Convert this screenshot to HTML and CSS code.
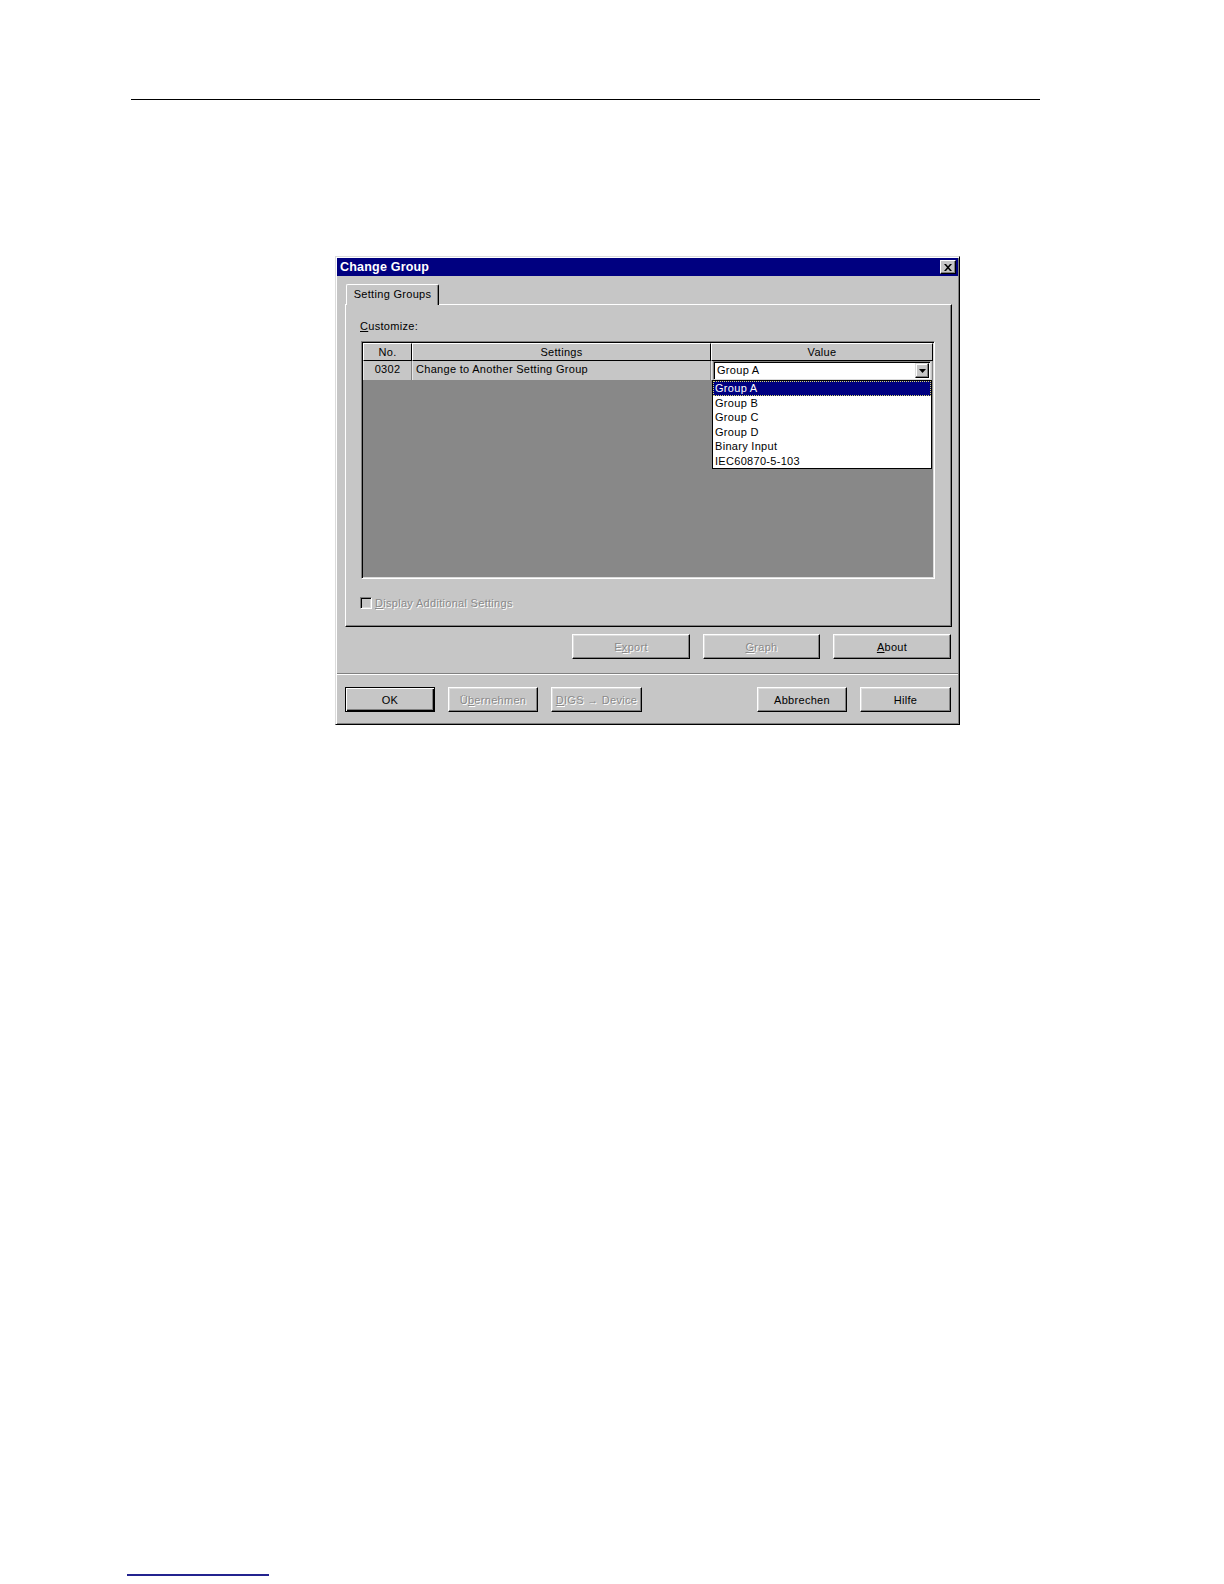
FILE: index.html
```html
<!DOCTYPE html>
<html>
<head>
<meta charset="utf-8">
<title>Change Group</title>
<link rel="stylesheet" href="styles.css">
</head>
<body>
<div class="page">
  <div class="rule"></div>

  <div class="dialog">
    <div class="titlebar">
      <span class="title">Change Group</span>
      <span class="close-btn">
        <svg width="8" height="7" viewBox="0 0 8 7"><path d="M0 0h2l2 2.3 2-2.3h2L5 3.5 8 7H6L4 4.7 2 7H0l3-3.5z" fill="#000"/></svg>
      </span>
    </div>

    <div class="dlg-body">
      <div class="tabs"><div class="tab">Setting Groups</div></div>
      <div class="panel">
        <div class="label"><u>C</u>ustomize:</div>
        <div class="grid">
          <div class="grid-inner">
            <div class="row head">
              <div class="hc">No.</div>
              <div class="hc">Settings</div>
              <div class="hc">Value</div>
            </div>
            <div class="row data">
              <div class="dc center">0302</div>
              <div class="dc">Change to Another Setting Group</div>
              <div class="dc val">
                <div class="combo">
                  <span class="combo-text">Group A</span>
                  <span class="dd-btn"><svg width="7" height="4" viewBox="0 0 7 4"><path d="M0 0h7L3.5 4z" fill="#000"/></svg></span>
                </div>
              </div>
            </div>
            <ul class="droplist">
              <li class="sel">Group A</li>
              <li>Group B</li>
              <li>Group C</li>
              <li>Group D</li>
              <li>Binary Input</li>
              <li>IEC60870-5-103</li>
            </ul>
          </div>
        </div>
        <div class="check-row">
          <span class="checkbox"></span>
          <span class="disabled"><u>D</u>isplay Additional Settings</span>
        </div>
      </div>

      <div class="btn-row upper">
        <div class="btn disabled w118">E<u>x</u>port</div>
        <div class="btn disabled w117"><u>G</u>raph</div>
        <div class="btn w118"><u>A</u>bout</div>
      </div>

      <div class="sep"></div>

      <div class="btn-row lower">
        <div class="group">
          <div class="btn default w90">OK</div>
          <div class="btn disabled w90">Ü<u>b</u>ernehmen</div>
          <div class="btn disabled w91"><u>D</u>IGS → Device</div>
        </div>
        <div class="group">
          <div class="btn w90">Abbrechen</div>
          <div class="btn w91">Hilfe</div>
        </div>
      </div>
    </div>
  </div>

  <div class="footrule"></div>
</div>
</body>
</html>
```
FILE: styles.css
```css
html, body {
  margin: 0;
  padding: 0;
  background: #fff;
}

.page {
  width: 1224px;
  height: 1584px;
  overflow: hidden;
  font-family: "Liberation Sans", Arial, sans-serif;
  font-size: 11px;
  letter-spacing: 0.3px;
  color: #000;
}

.rule {
  margin: 99px 0 0 131px;
  width: 909px;
  height: 1px;
  background: #000;
}

.footrule {
  margin: 849px 0 0 127px;
  width: 142px;
  height: 2px;
  background: #23238f;
}

/* ---- dialog frame ---- */
.dialog {
  margin: 156px 0 0 335px;
  width: 625px;
  height: 469px;
  box-sizing: border-box;
  background: #c6c6c6;
  border: 1px solid;
  border-color: #dcdcdc #000 #000 #dcdcdc;
  padding: 1px;
  box-shadow: inset 1px 1px 0 #fff, inset -1px -1px 0 #808080;
}

.titlebar {
  height: 18px;
  background: #000080;
  display: flex;
  align-items: center;
  justify-content: space-between;
  padding: 0 2px 0 3px;
}

.title {
  color: #fff;
  font-weight: bold;
  font-size: 12.5px;
  letter-spacing: 0.2px;
}

.close-btn {
  width: 16px;
  height: 14px;
  box-sizing: border-box;
  background: #c6c6c6;
  border: 1px solid;
  border-color: #fff #000 #000 #fff;
  box-shadow: inset -1px -1px 0 #808080;
  display: flex;
  align-items: center;
  justify-content: center;
}

.dlg-body {
  padding: 8px 6px 11px 8px;
}

/* ---- tabs ---- */
.tabs {
  display: flex;
  height: 20px;
  padding-left: 1px;
}

.tab {
  position: relative;
  z-index: 1;
  height: 21px;
  width: 93px;
  box-sizing: border-box;
  background: #c6c6c6;
  border-top: 1px solid #fff;
  border-left: 1px solid #fff;
  border-right: 1px solid #000;
  border-top-left-radius: 2px;
  border-top-right-radius: 2px;
  box-shadow: inset -1px 0 0 #808080;
  text-align: center;
  line-height: 19px;
}

.panel {
  height: 323px;
  box-sizing: border-box;
  border: 1px solid;
  border-color: #fff #000 #000 #fff;
  box-shadow: inset -1px -1px 0 #808080;
  padding: 15px 0 0 14px;
}

.label {
  height: 13px;
  line-height: 13px;
}

/* ---- settings grid ---- */
.grid {
  margin: 8px 0 0 1px;
  width: 574px;
  height: 238px;
  box-sizing: border-box;
  border: 1px solid;
  border-color: #808080 #fff #fff #808080;
  padding: 1px;
  box-shadow: inset 1px 1px 0 #000, inset -1px -1px 0 #dcdcdc;
}

.grid-inner {
  position: relative;
  height: 100%;
  background: #888;
}

.row {
  display: grid;
  grid-template-columns: 49px 299px 222px;
}

.head {
  height: 18px;
}

.hc {
  box-sizing: border-box;
  background: #c6c6c6;
  border: 1px solid;
  border-color: #fff #000 #000 #fff;
  text-align: center;
  line-height: 16px;
}

.data {
  height: 18px;
}

.dc {
  box-sizing: border-box;
  background: #c6c6c6;
  border-right: 1px solid #808080;
  border-left: 1px solid #e6e6e6;
  padding-left: 3px;
  line-height: 17px;
  white-space: nowrap;
}

.dc.center {
  text-align: center;
  padding-left: 0;
}

.dc.val {
  padding: 0 1px 0 1px;
  background: #c6c6c6;
}

.combo {
  height: 19px;
  box-sizing: border-box;
  background: #fff;
  border: 1px solid;
  border-color: #808080 #dcdcdc #dcdcdc #808080;
  box-shadow: inset 1px 1px 0 #000;
  display: flex;
  align-items: center;
  justify-content: space-between;
  padding: 0 1px 0 3px;
}

.combo-text {
  line-height: 15px;
}

.dd-btn {
  width: 14px;
  height: 15px;
  box-sizing: border-box;
  background: #c6c6c6;
  border: 1px solid;
  border-color: #dcdcdc #000 #000 #dcdcdc;
  box-shadow: inset -1px -1px 0 #808080, inset 1px 1px 0 #fff;
  display: flex;
  align-items: center;
  justify-content: center;
}

.droplist {
  position: absolute;
  left: 349px;
  top: 37px;
  width: 220px;
  height: 89px;
  box-sizing: border-box;
  margin: 0;
  padding: 0;
  list-style: none;
  background: #fff;
  border: 1px solid #000;
}

.droplist li {
  height: 14.5px;
  line-height: 14.5px;
  padding-left: 2px;
  white-space: nowrap;
}

.droplist li.sel {
  background: #000080;
  color: #fff;
  outline: 1px dotted #d8d870;
  outline-offset: -1px;
}

/* ---- checkbox ---- */
.check-row {
  margin-top: 17px;
  display: flex;
  align-items: center;
  gap: 3px;
  height: 13px;
}

.checkbox {
  width: 12px;
  height: 12px;
  box-sizing: border-box;
  background: #c6c6c6;
  border: 1px solid;
  border-color: #808080 #fff #fff #808080;
  box-shadow: inset 1px 1px 0 #000, inset -1px -1px 0 #dcdcdc;
}

.disabled {
  color: #8a8a8a;
  text-shadow: 1px 1px 0 #fff;
}

/* ---- buttons ---- */
.btn-row {
  display: flex;
}

.btn-row.upper {
  margin-top: 7px;
  justify-content: flex-end;
  gap: 13px;
  padding-right: 1px;
}

.btn-row.lower {
  justify-content: space-between;
  margin-top: 12px;
  padding-right: 1px;
}

.group {
  display: flex;
  gap: 13px;
}

.btn {
  height: 25px;
  box-sizing: border-box;
  background: #c6c6c6;
  border: 1px solid;
  border-color: #fff #000 #000 #fff;
  box-shadow: inset -1px -1px 0 #808080, inset 1px 1px 0 #dcdcdc;
  display: flex;
  align-items: center;
  justify-content: center;
  white-space: nowrap;
}

.btn.default {
  border-color: #000;
  box-shadow: inset 1px 1px 0 #fff, inset -1px -1px 0 #000, inset -2px -2px 0 #808080;
}

.w90 { width: 90px; }
.w91 { width: 91px; }
.w117 { width: 117px; }
.w118 { width: 118px; }

.sep {
  margin: 14px -6px 0 -8px;
  height: 1px;
  background: #808080;
  border-bottom: 1px solid #fff;
}
```
